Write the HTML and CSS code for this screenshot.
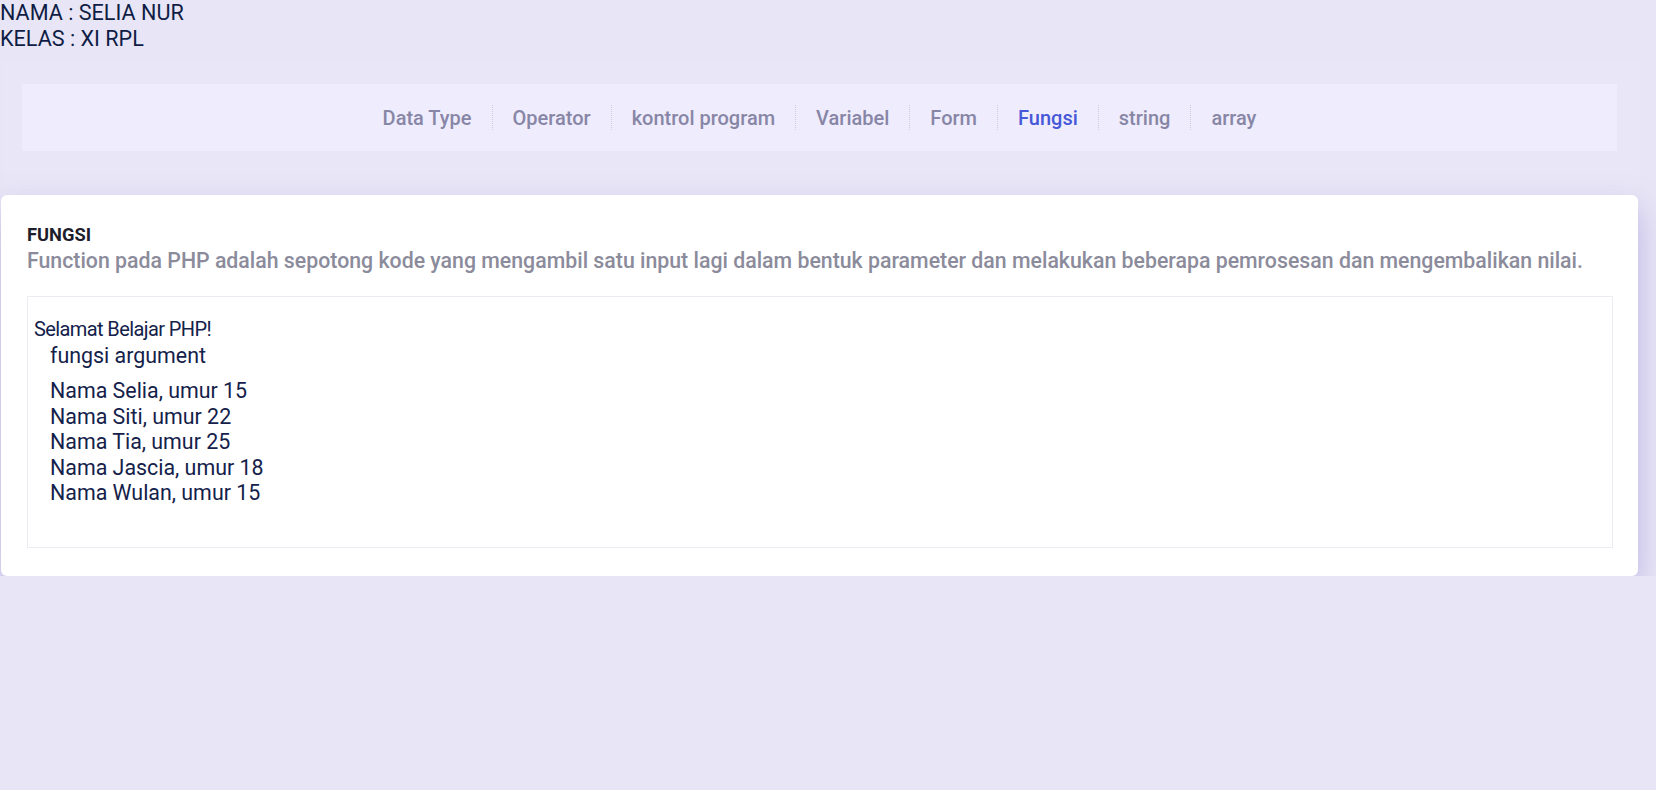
FILE: index.html
```html
<!DOCTYPE html>
<html lang="id">
<head>
<meta charset="utf-8">
<title>Fungsi</title>
<link rel="stylesheet" href="styles.css">
</head>
<body>
<div class="info">
  <div>NAMA : SELIA NUR</div>
  <div>KELAS : XI RPL</div>
</div>
<div class="panel">
  <nav class="nav">
    <a class="nav-item">Data Type</a>
    <span class="sep"></span>
    <a class="nav-item">Operator</a>
    <span class="sep"></span>
    <a class="nav-item">kontrol program</a>
    <span class="sep"></span>
    <a class="nav-item">Variabel</a>
    <span class="sep"></span>
    <a class="nav-item">Form</a>
    <span class="sep"></span>
    <a class="nav-item active">Fungsi</a>
    <span class="sep"></span>
    <a class="nav-item">string</a>
    <span class="sep"></span>
    <a class="nav-item">array</a>
  </nav>
</div>
<section class="card">
  <h5 class="card-title">FUNGSI</h5>
  <p class="card-desc">Function pada PHP adalah sepotong kode yang mengambil satu input lagi dalam bentuk parameter dan melakukan beberapa pemrosesan dan mengembalikan nilai.</p>
  <div class="output">
    <div class="greeting">Selamat Belajar PHP!</div>
    <div class="indent">
      <div class="line">fungsi argument</div>
      <div class="list">
        <div class="line">Nama Selia, umur 15</div>
        <div class="line">Nama Siti, umur 22</div>
        <div class="line">Nama Tia, umur 25</div>
        <div class="line">Nama Jascia, umur 18</div>
        <div class="line">Nama Wulan, umur 15</div>
      </div>
    </div>
  </div>
</section>
</body>
</html>
```

FILE: styles.css
```css
html, body {
  margin: 0;
  padding: 0;
}
body {
  background: #e8e5f6;
  font-family: Roboto, "Liberation Sans", sans-serif;
  color: #14214a;
}
.info {
  font-size: 21.6px;
  line-height: 26px;
  color: #0f1d45;
}
.panel {
  margin: 8px 17px 0 2px;
  padding: 24px 22px 44px 20px;
  background: #e9e6f7;
  border-radius: 4px 4px 0 0;
}
.nav {
  display: flex;
  align-items: center;
  justify-content: center;
  height: 67px;
  background: #efedfd;
}
.nav-item {
  font-size: 20px;
  font-weight: 500;
  color: #8886a6;
  padding: 0 20px;
  line-height: 24px;
}
.nav-item.active {
  color: #4658d8;
}
.sep {
  width: 0;
  height: 25px;
  border-left: 1px dotted #cfcde0;
}
.card {
  margin: 0 18px 0 1px;
  padding: 30px 25px 28px 26px;
  background: #ffffff;
  border-radius: 6px;
  box-shadow: 0 14px 30px rgba(150, 140, 210, 0.55);
}
.card-title {
  margin: 0;
  font-size: 18.3px;
  line-height: 19px;
  font-weight: 700;
  color: #1d1d2b;
}
.card-desc {
  margin: 5px 0 23px;
  font-size: 21.3px;
  line-height: 24px;
  font-weight: 500;
  color: #8b8b9b;
}
.output {
  border: 1px solid #ebebf1;
  padding: 20px 6px 41px;
  color: #14214a;
}
.greeting {
  font-size: 20px;
  letter-spacing: -0.6px;
  line-height: 25.5px;
}
.indent {
  padding-left: 16px;
  font-size: 21.4px;
  line-height: 25.5px;
}
.list {
  margin-top: 10px;
}
```
